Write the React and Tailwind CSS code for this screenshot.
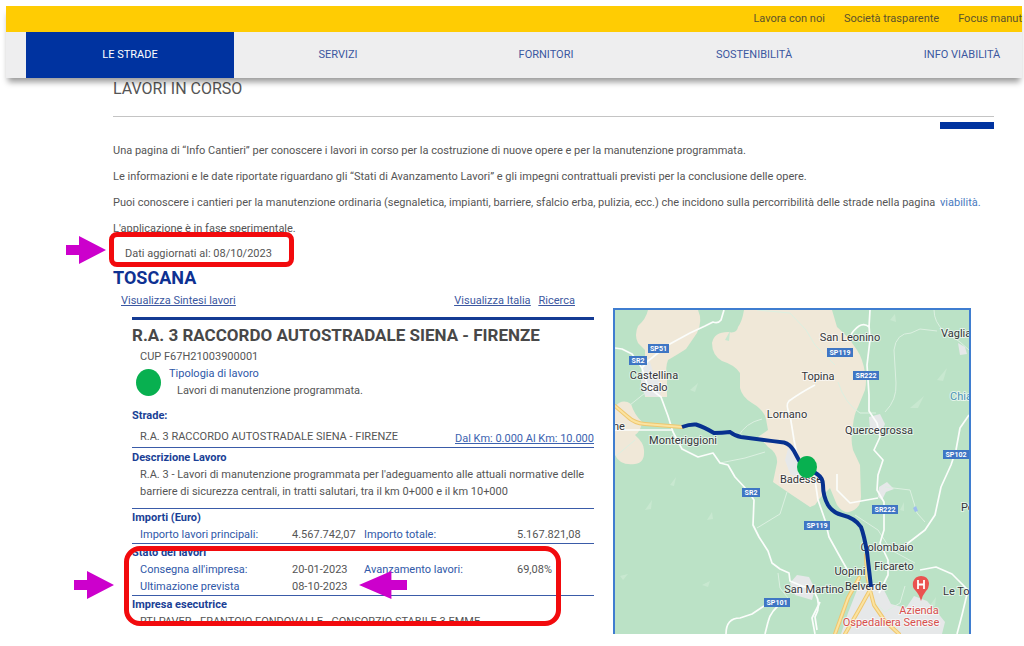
const topLinks = ["Lavora con noi", "Società trasparente", "Focus manut"];
const sections = ["LE STRADE", "SERVIZI", "FORNITORI", "SOSTENIBILITÀ", "INFO VIABILITÀ"];

const places = [
  ["San Leonino", 850, 337], ["Topina", 818, 376], ["Lornano", 787, 414],
  ["Castellina", 654, 375], ["Scalo", 654, 387], ["Monteriggioni", 683, 440],
  ["Quercegrossa", 879, 430], ["Badesse", 801, 479], ["Colombaio", 887, 547],
  ["Ficareto", 894, 566], ["Uopini", 850, 571], ["San Martino", 814, 589],
  ["Belverde", 866, 586],
];
const edgePlaces = [["Vaglia", 941, 333], ["Po", 961, 507], ["Le To", 943, 591], ["ne", 613, 426]];
const shields = [
  ["SP51", 648, 349, 21], ["SR2", 629, 361, 18], ["SP119", 827, 353, 26], ["SR222", 853, 376, 26],
  ["SP102", 943, 455, 26], ["SR2", 742, 493, 18], ["SP119", 804, 526, 26], ["SR222", 872, 510, 26],
  ["SP101", 764, 603, 26],
];
const minorRoads = [
  "M724 310 L721 320 Q718 324 713 322 L705 326 L690 333 L668 345 L648 361 L642 368",
  "M615 348 L622 349 L632 354 L642 368 L648 387 L661 397 L668 416 L673 432 L682 449 L698 457 L713 453 L720 463 L728 465 L735 477 L748 491 L754 500 L753 525 L759 537 L768 551 L772 563 L780 569 L789 573 L790 581 L802 586 L815 590",
  "M615 430 L673 430",
  "M815 385 Q800 393 789 401 Q785 405 790 415 L794 440 L797 455",
  "M870 310 L869 327 Q862 320 852 333 L849 340",
  "M869 325 L870 340 L867 365 L869 395 L869 411 L877 423 L880 437 L874 450 L883 460 L878 475 L877 490 L884 502 L884 530 L880 543 L888 560 L888 575 L879 593",
  "M969 415 L960 428 L956 450 L951 465 L941 487 L935 515 L925 530 L912 540 L899 550",
  "M764 606 L752 614 L740 618 Q726 618 726 634",
  "M785 600 Q770 611 768 622 L765 634",
  "M820 602 L812 618 L815 634",
  "M815 480 L818 500 L825 520 L829 537 L839 555 L848 571",
  "M837 474 L837 490 L850 503 L878 498",
  "M920 570 L936 567 L952 574 L968 590 L962 615 L957 634",
  "M815 593 Q822 605 815 617 L817 630",
];
const faintRoads = [
  "M885 412 Q897 400 896 383 L894 350 Q896 333 911 333 L920 329 L937 331",
  "M934 310 Q934 322 944 331 L960 342 L969 350",
  "M838 382 Q845 404 860 413 L876 413",
  "M757 310 L790 313 L806 330 L815 345 L835 365",
  "M757 528 L780 514 L787 492",
  "M738 437 Q745 423 762 419",
  "M720 463 L745 458 L765 452",
  "M616 456 L635 440",
  "M885 487 L910 490 L917 513 L925 522",
  "M855 515 L878 530 L891 550 L915 563",
  "M778 573 L780 588 L788 598",
  "M630 405 L645 393",
  "M905 586 L900 603 L885 612 L872 600",
];
const terrain = [
  "M670 485 l6 -8 l-2 9z", "M645 510 l7 -10 l-1 9z", "M707 520 l5 -8 l1 7z", "M620 576 l8 -2 l-5 6z",
  "M702 585 l8 -4 l-2 6z", "M725 340 l5 -9 l-1 10z", "M910 408 l14 -12 l-6 12z", "M937 380 l10 -12 l-4 13z",
  "M890 320 l5 -6 l1 8z", "M900 510 l4 -8 l0 9z", "M690 390 l8 -7 l-3 9z", "M930 605 l6 -8 l-1 9z",
];

function RoadMap() {
  return (
    <svg
      viewBox="615 310 354 324"
      role="img"
      aria-label="Mappa"
      className="block w-full"
      fontFamily="Roboto, sans-serif"
      fontSize="11"
    >
      <rect x="615" y="310" width="354" height="324" fill="#bbe2c6" />
      <g fill="#f0e8d8">
        <path d="M744 310 Q742 322 738 327 Q737 334 728 332 Q714 332 712 343 Q712 355 722 361 Q735 365 740 373 V388 Q742 397 752 403 Q764 410 766 419 L768 430 L758 437 Q764 442 768 447 Q778 453 777 463 L773 482 L792 495 L810 507 L815 505 L820 498 L830 488 L837 505 Q844 515 852 511 Q861 507 861 497 L860 465 L853 450 Q850 438 853 425 Q854 414 858 407 L865 390 Q867 380 865 373 Q863 359 857 350 Q848 336 837 327 L832 310Z" />
        <path d="M648 310 Q646 319 638 326 Q634 335 638 343 L645 350 L645 397 H667 V377 Q665 368 668 360 Q680 353 686 349 L697 333 Q703 321 698 310Z" />
        <path d="M615 407 Q622 398 631 404 Q634 414 642 422 Q641 431 635 435 Q644 443 644 450 Q645 463 635 464 Q620 466 615 455Z" />
        <path d="M810 470 L815 476 L818 500 L810 507 L806 490Z" />
      </g>
      <g fill="#e6e8e9">
        <path d="M642 360 L650 362 L654 375 L662 385 L660 397 L645 396 L641 385Z" />
        <path d="M789 445 L797 453 L802 468 L799 478 L790 474 L785 460Z" />
        <path d="M869 417 L880 414 L885 424 L880 435 L870 430Z" />
        <path d="M879 487 L887 482 L894 489 L886 492 L882 500 L878 497Z" />
        <path d="M857 590 L872 583 L884 590 L891 604 L906 608 L914 596 L927 601 L937 612 L945 622 L942 634 L841 634 L848 613Z" />
        <path d="M790 583 L797 575 L809 577 L815 589 L812 600 L795 595Z" />
        <path d="M958 343 L965 347 L967 354 L960 355Z" />
      </g>
      <g fill="#c8e8d0">{terrain.map((d) => <path key={d} d={d} />)}</g>
      <g fill="none" stroke="#dcf0e1" strokeWidth="1" strokeLinejoin="round">
        {faintRoads.map((d) => <path key={d} d={d} />)}
      </g>
      <g fill="none" stroke="#fbfdfb" strokeWidth="1.7" strokeLinejoin="round">
        {minorRoads.map((d) => <path key={d} d={d} />)}
      </g>
      <g fill="none" strokeLinecap="round" strokeLinejoin="round">
        <g stroke="#efc76f" strokeWidth="4">
          <path d="M615 406 L628 417 Q634 423 645 424 L682 427" />
          <path d="M866 555 L867 575 L870 590 L874 605 L885 621 L899 634" />
          <path d="M859 578 L848 598 L835 634" />
          <path d="M870 590 L860 608 L845 634" />
        </g>
        <g stroke="#fbe3a0" strokeWidth="2">
          <path d="M615 406 L628 417 Q634 423 645 424 L682 427" />
          <path d="M866 555 L867 575 L870 590 L874 605 L885 621 L899 634" />
          <path d="M859 578 L848 598 L835 634" />
          <path d="M870 590 L860 608 L845 634" />
        </g>
      </g>
      <path d="M913 508 l3 -2 l2 5 l-3 1z" fill="#9dbcf0" />
      <g fill="#35363a" stroke="#ffffff" strokeOpacity="0.6" strokeWidth="2" paintOrder="stroke">
        {places.map(([name, x, y]) => (
          <text key={name} x={x} y={y + 4} textAnchor="middle">{name}</text>
        ))}
        {edgePlaces.map(([name, x, y]) => (
          <text key={name} x={x} y={y + 4}>{name}</text>
        ))}
        <text x="950" y="400" fill="#4b93b5">Chia</text>
        <g fill="#d8504d" textAnchor="middle">
          <text x="919" y="614">Azienda</text>
          <text x="891" y="626">Ospedaliera Senese</text>
        </g>
      </g>
      {shields.map(([code, x, cy, w]) => (
        <g key={code + x}>
          <rect x={x} y={cy - 5} width={w} height="9" fill="#3f76c4" />
          <text x={x + w / 2} y={cy + 2} textAnchor="middle" fontSize="7" fontWeight="700" fill="#ffffff">{code}</text>
        </g>
      ))}
      <path
        d="M682 427 Q690 424 696 424.500 Q704 427 714 433 Q722 433 730 432 Q735 436 741 437 Q762 440 784 442.500 Q790 444 794 451 L801 464 L817 474 Q823 478 823 485 Q823 496 828 505 Q833 513 842 515 Q855 518 861 527 Q864 535 867 552 L871 587"
        fill="none" stroke="#07318f" strokeWidth="4"
      />
      <ellipse cx="807" cy="467" rx="10" ry="11" fill="#08b050" />
      <path d="M921 601 Q919 594 915 590 Q912 587 913 582 Q915 576 921 576 Q928 576 929 583 Q929 588 926 591 Q922 596 921 601Z" fill="#ea5350" />
      <path d="M918 580 V589 M924 580 V589 M918 584.500 H924" stroke="#ffffff" strokeWidth="1.800" />
    </svg>
  );
}

function Arrow({ className }) {
  return (
    <svg viewBox="0 0 40 28" preserveAspectRatio="none" aria-hidden="true" className={className}>
      <path d="M0 9 H13 V0 L40 14 L13 28 V19 H0Z" fill="#cc00cc" />
    </svg>
  );
}

function Heading({ children }) {
  return <h3 className="font-bold text-[#1a3f96]">{children}</h3>;
}

export default function App() {
  return (
    <div className="overflow-hidden bg-white pt-1.5 font-[Roboto,sans-serif] text-[11px] text-[#555555]">
      <header className="relative mr-0.5 ml-1.5 shadow-[0_6px_6px_-2px_rgba(0,0,0,0.4)]">
        <nav aria-label="Servizio" className="flex h-[26px] items-center justify-end gap-[19px] bg-[#ffcc03] text-[#5c532c]">
          {topLinks.map((label) => <a key={label} href="#">{label}</a>)}
        </nav>
        <nav aria-label="Principale" className="flex h-[46px] overflow-hidden bg-[#eeeeef] pl-5">
          {sections.map((label, i) => (
            <a
              key={label}
              href="#"
              className={
                i === 0
                  ? "flex w-52 shrink-0 items-center justify-center bg-[#0033a0] text-white"
                  : "flex w-52 shrink-0 items-center justify-center text-[#3b57a0]"
              }
            >
              {label}
            </a>
          ))}
        </nav>
      </header>

      <main className="pr-[30px] pl-[113px]">
        <h1 className="border-b border-[#c4c4c4] pb-4 text-base leading-[22px]">LAVORI IN CORSO</h1>
        <div className="mt-[5px] ml-auto h-[7px] w-[54px] bg-[#0033a0]" />

        <div className="mt-[9px] leading-[26px] whitespace-nowrap">
          <p>Una pagina di “Info Cantieri” per conoscere i lavori in corso per la costruzione di nuove opere e per la manutenzione programmata.</p>
          <p>Le informazioni e le date riportate riguardano gli “Stati di Avanzamento Lavori” e gli impegni contrattuali previsti per la conclusione delle opere.</p>
          <p>
            Puoi conoscere i cantieri per la manutenzione ordinaria (segnaletica, impianti, barriere, sfalcio erba, pulizia, ecc.) che incidono sulla percorribilità delle strade nella pagina{" "}
            <a href="#" className="ml-0.5 text-[#4a7ac0]">viabilità.</a>
          </p>
          <p>L'applicazione è in fase sperimentale.</p>
          <p className="relative -mt-px pl-3">
            Dati aggiornati al: 08/10/2023
            <span className="absolute -top-[9px] -left-1 h-[35px] w-[185px] rounded-lg border-5 border-[#f20a0d]" />
            <Arrow className="absolute -top-[5px] -left-[47px] h-7 w-10" />
          </p>
        </div>

        <h2 className="text-lg leading-[22px] font-bold text-[#0e3192]">TOSCANA</h2>

        <div className="flex gap-[19px]">
          <section className="w-[481px] shrink-0">
            <nav aria-label="Cantieri" className="flex gap-2 pr-[19px] pl-2 leading-[23px] text-[#3b57a0] underline">
              <a href="#" className="mr-auto">Visualizza Sintesi lavori</a>
              <a href="#">Visualizza Italia</a>
              <a href="#">Ricerca</a>
            </nav>

            <article className="relative mt-[5px] ml-[19px] border-t-3 border-[#143b94] leading-[17px]">
              <h2 className="pt-[3px] text-[17px] leading-[25px] font-bold text-[#484848]">R.A. 3 RACCORDO AUTOSTRADALE SIENA - FIRENZE</h2>
              <p className="pl-2">CUP F67H21003900001</p>
              <div className="flex gap-2 pl-1">
                <span className="mt-1 h-[27px] w-[25px] rounded-[50%] bg-[#08b050]" />
                <div>
                  <h3 className="text-[#2f58a8]">Tipologia di lavoro</h3>
                  <p className="pl-2">Lavori di manutenzione programmata.</p>
                </div>
              </div>
              <div className="border-b border-[#3a5ba8] pt-2">
                <Heading>Strade:</Heading>
                <div className="flex items-end justify-between pt-1 pl-2">
                  <p className="pb-[2px]">R.A. 3 RACCORDO AUTOSTRADALE SIENA - FIRENZE</p>
                  <a href="#" className="text-[#3b62b0] underline">Dal Km: 0.000 Al Km: 10.000</a>
                </div>
              </div>
              <div className="border-b border-[#3a5ba8] pt-px pb-2">
                <Heading>Descrizione Lavoro</Heading>
                <p className="pl-2">
                  R.A. 3 - Lavori di manutenzione programmata per l'adeguamento alle attuali normative delle barriere di sicurezza centrali, in tratti salutari, tra il km 0+000 e il km 10+000
                </p>
              </div>
              <div className="border-b border-[#3a5ba8]">
                <Heading>Importi (Euro)</Heading>
                <table className="w-full table-fixed text-left">
                  <tbody>
                    <tr>
                      <th scope="row" className="w-[160px] pl-2 font-normal text-[#2f58a8]">Importo lavori principali:</th>
                      <td className="w-[72px]">4.567.742,07</td>
                      <th scope="row" className="w-[153px] font-normal text-[#2f58a8]">Importo totale:</th>
                      <td>5.167.821,08</td>
                    </tr>
                  </tbody>
                </table>
              </div>
              <div className="border-b border-[#3a5ba8]">
                <Heading>Stato dei lavori</Heading>
                <table className="w-full table-fixed text-left">
                  <tbody>
                    <tr>
                      <th scope="row" className="w-[160px] pl-2 font-normal text-[#2f58a8]">Consegna all'impresa:</th>
                      <td className="w-[72px]">20-01-2023</td>
                      <th scope="row" className="w-[153px] font-normal text-[#2f58a8]">Avanzamento lavori:</th>
                      <td>69,08%</td>
                    </tr>
                    <tr>
                      <th scope="row" className="pl-2 font-normal text-[#2f58a8]">Ultimazione prevista</th>
                      <td>08-10-2023</td>
                    </tr>
                  </tbody>
                </table>
              </div>
              <Heading>Impresa esecutrice</Heading>
              <p className="pl-2">RTI PAVER - FRANTOIO FONDOVALLE - CONSORZIO STABILE 3 EMME</p>

              <span className="absolute bottom-1 -left-2 h-20 w-[437px] rounded-2xl border-5 border-[#f20a0d]" />
              <Arrow className="absolute bottom-[31px] -left-[58px] h-7 w-10" />
              <Arrow className="absolute bottom-[31px] left-[227px] h-7 w-12 rotate-180" />
            </article>
          </section>

          <div className="mt-[19px] mr-[23px] min-w-0 flex-1 self-start border-2 border-b-0 border-[#3f7dd0]">
            <RoadMap />
          </div>
        </div>
      </main>
    </div>
  );
}
